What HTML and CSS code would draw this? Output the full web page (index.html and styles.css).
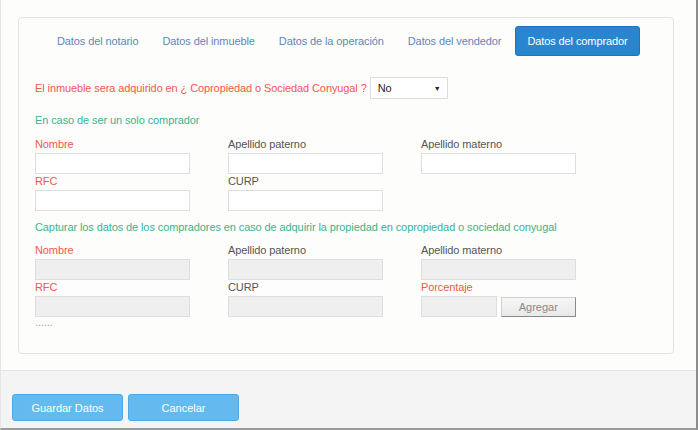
FILE: index.html
```html
<!DOCTYPE html>
<html lang="es">
<head>
<meta charset="utf-8">
<title>Datos del comprador</title>
<link rel="stylesheet" href="styles.css">
</head>
<body>
<div class="modal">
  <div class="modal-body">
    <div class="panel">
      <ul class="tabs">
        <li class="tab">Datos del notario</li>
        <li class="tab">Datos del inmueble</li>
        <li class="tab">Datos de la operación</li>
        <li class="tab">Datos del vendedor</li>
        <li class="tab active">Datos del comprador</li>
      </ul>
      <div class="question">
        <span class="red">El inmueble sera adquirido en ¿ Copropiedad o Sociedad Conyugal ?</span>
        <div class="select"><span>No</span><span class="caret">▼</span></div>
      </div>
      <p class="section">En caso de ser un solo comprador</p>
      <div class="grid">
        <div class="field"><label class="red">Nombre</label><div class="input"></div></div>
        <div class="field"><label>Apellido paterno</label><div class="input"></div></div>
        <div class="field"><label>Apellido materno</label><div class="input"></div></div>
        <div class="field"><label class="red">RFC</label><div class="input"></div></div>
        <div class="field"><label>CURP</label><div class="input"></div></div>
      </div>
      <p class="section section2">Capturar los datos de los compradores en caso de adquirir la propiedad en copropiedad o sociedad conyugal</p>
      <div class="grid grid2">
        <div class="field"><label class="red">Nombre</label><div class="input disabled"></div></div>
        <div class="field"><label>Apellido paterno</label><div class="input disabled"></div></div>
        <div class="field"><label>Apellido materno</label><div class="input disabled"></div></div>
        <div class="field"><label class="red">RFC</label><div class="input disabled"></div></div>
        <div class="field"><label>CURP</label><div class="input disabled"></div></div>
        <div class="field"><label class="red">Porcentaje</label>
          <div class="row"><div class="input disabled small"></div><button class="add" type="button">Agregar</button></div>
        </div>
      </div>
      <div class="dots">......</div>
    </div>
  </div>
  <div class="modal-footer">
    <button class="btn" type="button">Guardar Datos</button>
    <button class="btn" type="button">Cancelar</button>
  </div>
</div>
</body>
</html>
```

FILE: styles.css
```css
html, body {
  margin: 0;
  padding: 0;
  background: #fdfdfb;
}
body {
  font-family: "Liberation Sans", Arial, sans-serif;
  font-size: 11px;
  letter-spacing: -0.1px;
  color: #555;
  width: 700px;
  height: 430px;
  overflow: hidden;
}
.modal {
  width: 695px;
  height: 428px;
  border-left: 1px solid #e4e4e2;
  border-right: 2px solid #8c8c8c;
  border-bottom: 2px solid #9a9a9a;
  background: #fdfdfb;
  display: flex;
  flex-direction: column;
}
.modal-body {
  padding: 17px 22px 16px 17px;
}
.panel {
  height: 337px;
  border: 1px solid #e3e3e3;
  border-radius: 4px;
  padding: 8px 16px 0 16px;
  box-sizing: border-box;
}
.tabs {
  list-style: none;
  margin: 0 0 0 10px;
  padding: 0;
  display: flex;
}
.tab {
  flex-shrink: 0;
  white-space: nowrap;
  height: 30px;
  line-height: 30px;
  padding: 0 12px;
  color: #5f86bd;
}
.tab.active {
  background: #2a85cf;
  color: #fff;
  border: 1px solid #2173b8;
  border-radius: 3px;
  line-height: 28px;
  box-sizing: border-box;
  padding: 0 11px;
  margin-left: 2px;
}
.red { color: #f3584a; }
.question {
  display: flex;
  align-items: center;
  gap: 3px;
  margin-top: 21px;
  white-space: nowrap;
}
.select {
  width: 78px;
  height: 22px;
  box-sizing: border-box;
  border: 1px solid #dcdcdc;
  background: #fff;
  display: flex;
  align-items: center;
  justify-content: space-between;
  padding: 0 6px 0 7px;
  color: #222;
}
.caret {
  font-size: 7px;
  color: #222;
}
.section {
  margin: 14px 0 0 0;
  color: #3bb38f;
  line-height: 14px;
  white-space: nowrap;
}
.section2 {
  margin-top: 9px;
}
.grid {
  display: grid;
  grid-template-columns: 155px 155px 155px;
  column-gap: 38px;
  margin-top: 10px;
}
.grid2 {
  margin-top: 9px;
}
.field label {
  display: block;
  height: 14px;
  line-height: 14px;
}
.field label:not(.red) { color: #555; }
.input {
  height: 21px;
  box-sizing: border-box;
  border: 1px solid #dedede;
  background: #fff;
  margin-top: 2px;
}
.input.disabled {
  background: #efefef;
  border-color: #dedede;
}
.row {
  display: flex;
  align-items: center;
  gap: 4px;
}
.input.small { width: 77px; }
.add {
  width: 77px;
  height: 20px;
  margin-top: 2px;
  padding: 0;
  font-family: "Liberation Sans", Arial, sans-serif;
  font-size: 11px;
  color: #8a8a8a;
  background: linear-gradient(#f6f6f6, #e9e9e9);
  border: 1px solid #cfcfcf;
  border-right-color: #8a8a8a;
  border-bottom-color: #8a8a8a;
}
.dots {
  color: #f0857a;
  margin-top: 0;
  line-height: 10px;
}
.modal-footer {
  flex: 1;
  background: #f4f4f4;
  border-top: 1px solid #e6e6e6;
  padding: 23px 0 0 11px;
  display: flex;
  gap: 5px;
  align-items: flex-start;
}
.btn {
  width: 111px;
  height: 27px;
  background: #64baef;
  border: 1px solid #4ea9e6;
  border-radius: 3px;
  color: #fff;
  font-family: "Liberation Sans", Arial, sans-serif;
  font-size: 11px;
  padding: 0;
}
```
